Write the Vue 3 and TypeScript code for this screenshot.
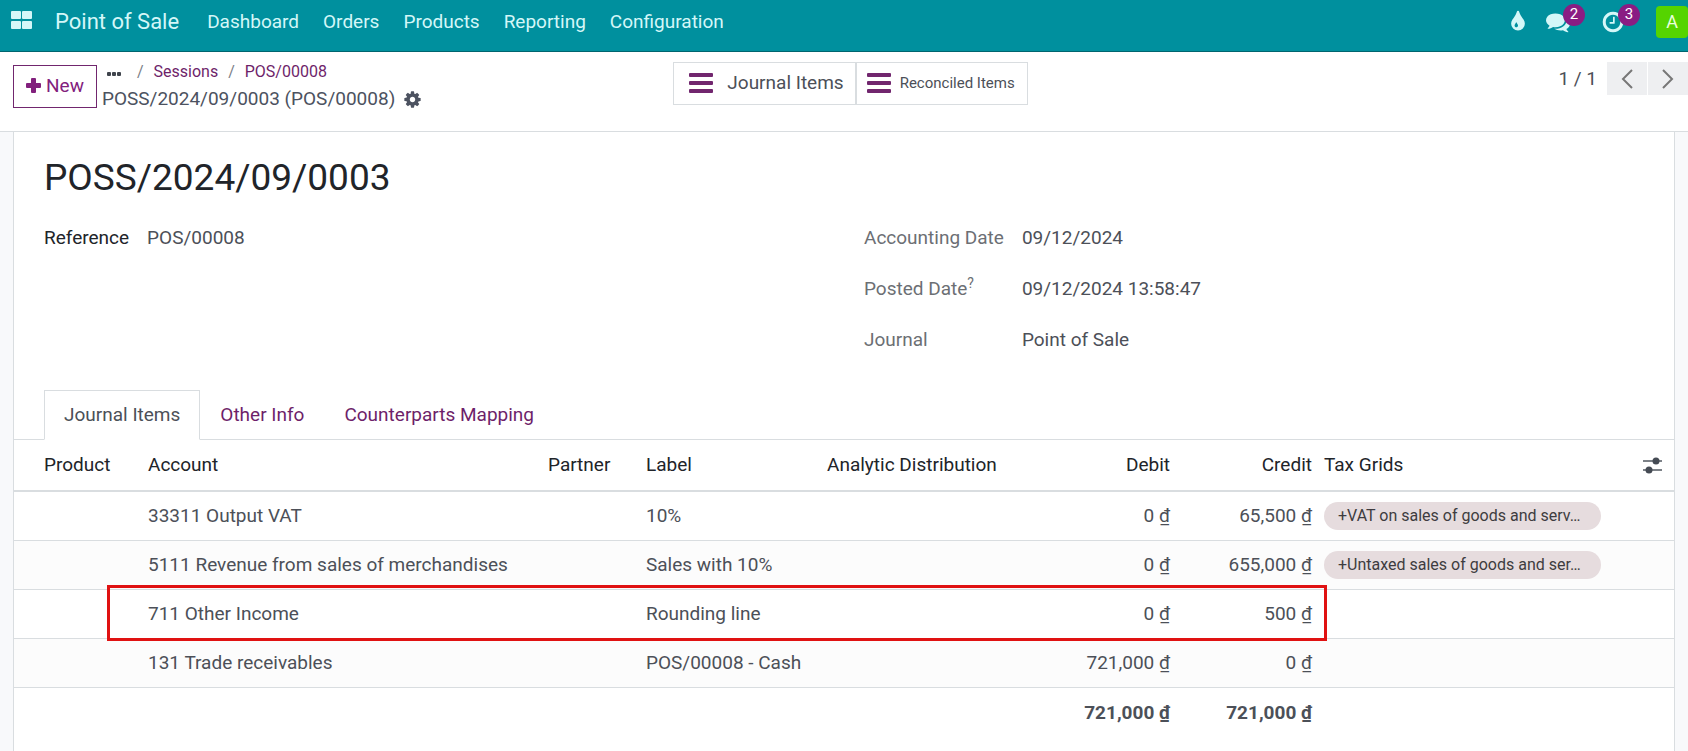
<script setup lang="ts">
interface JournalLine {
  account: string
  label: string
  debit: string
  credit: string
  tag?: string
  highlighted?: boolean
}

interface Field {
  label: string
  value: string
  help?: boolean
}

const menus: string[] = ['Dashboard', 'Orders', 'Products', 'Reporting', 'Configuration']

const fields: Field[] = [
  { label: 'Accounting Date', value: '09/12/2024' },
  { label: 'Posted Date', value: '09/12/2024 13:58:47', help: true },
  { label: 'Journal', value: 'Point of Sale' },
]

const tabs: string[] = ['Journal Items', 'Other Info', 'Counterparts Mapping']

const lines: JournalLine[] = [
  { account: '33311 Output VAT', label: '10%', debit: '0 ₫', credit: '65,500 ₫', tag: '+VAT on sales of goods and serv…' },
  { account: '5111 Revenue from sales of merchandises', label: 'Sales with 10%', debit: '0 ₫', credit: '655,000 ₫', tag: '+Untaxed sales of goods and ser…' },
  { account: '711 Other Income', label: 'Rounding line', debit: '0 ₫', credit: '500 ₫', highlighted: true },
  { account: '131 Trade receivables', label: 'POS/00008 - Cash', debit: '721,000 ₫', credit: '0 ₫' },
]
</script>

<template>
  <div class="app">
    <header class="navbar">
      <button class="icon-btn apps" aria-label="Home menu">
        <svg width="22" height="18" viewBox="0 0 22 18" fill="currentColor">
          <rect width="10" height="8" rx="1" />
          <rect x="11" width="10" height="8" rx="1" />
          <rect y="10" width="10" height="8" rx="1" />
          <rect x="11" y="10" width="10" height="8" rx="1" />
        </svg>
      </button>
      <a class="brand" href="#">Point of Sale</a>
      <nav class="menus">
        <a v-for="menu in menus" :key="menu" href="#">{{ menu }}</a>
      </nav>
      <div class="systray">
        <button class="icon-btn" aria-label="Theme">
          <svg width="24" height="24" viewBox="0 0 1792 1792" fill="currentColor"><path d="M896 1152q0-36-20-69-1-1-15.500-22.500t-25.500-38-25-44-21-50.500q-4-16-21-16t-21 16q-7 23-21 50.500t-25 44-25.500 38-15.500 22.500q-20 33-20 69 0 53 37.500 90.500t90.500 37.500 90.500-37.500 37.500-90.500zm512-128q0 212-150 362t-362 150-362-150-150-362q0-145 81-275 6-9 62.500-90.500t101-151 99.500-178 83-201.500q9-30 34-47t51-17 51.500 17 33.500 47q28 93 83 201.500t99.500 178 101 151 62.500 90.500q81 127 81 275z" /></svg>
        </button>
        <button class="icon-btn with-badge" aria-label="Messages">
          <svg width="24" height="24" viewBox="0 0 1792 1792" fill="currentColor"><path d="M1408 768q0 139-94 257t-256.500 186.500-353.500 68.500q-86 0-176-16-124 88-278 128-36 9-86 16h-3q-11 0-20.500-8t-11.500-21q-1-3-1-6.500t.5-6.500 2-6l2.500-5 3.500-5.500 4-5 4.500-5 4-4.500q5-6 23-25t26-29.500 22.500-29 25-38.500 20.500-44q-124-72-195-177t-71-224q0-139 94-257t256.500-186.500 353.500-68.500 353.500 68.500 256.500 186.500 94 257zm384 256q0 120-71 224.500t-195 176.500q10 24 20.500 44t25 38.500 22.500 29 26 29.500 23 25q1 1 4 4.500t4.500 5 4 5 3.500 5.500l2.500 5 2 6 .5 6.500-1 6.500q-3 14-13 22t-22 7q-50-7-86-16-154-40-278-128-90 16-176 16-271 0-472-132 58 4 88 4 161 0 309-45t264-129q125-92 192-212t67-254q0-77-23-152 129 71 204 178t75 230z" /></svg>
          <span class="badge">2</span>
        </button>
        <button class="icon-btn with-badge" aria-label="Activities">
          <svg width="24" height="24" viewBox="0 0 1792 1792" fill="currentColor"><path d="M1024 544v448q0 14-9 23t-23 9h-320q-14 0-23-9t-9-23v-64q0-14 9-23t23-9h224v-352q0-14 9-23t23-9h64q14 0 23 9t9 23zm416 352q0-148-73-273t-198-198-273-73-273 73-198 198-73 273 73 273 198 198 273 73 273-73 198-198 73-273zm224 0q0 209-103 385.500t-279.500 279.500-385.500 103-385.500-103-279.500-279.500-103-385.500 103-385.500 279.500-279.500 385.500-103 385.500 103 279.500 279.500 103 385.500z" /></svg>
          <span class="badge">3</span>
        </button>
        <button class="avatar">A</button>
      </div>
    </header>

    <section class="control-panel">
      <div class="left">
        <button class="new-btn">
          <svg width="15" height="15" viewBox="0 0 15 15" fill="currentColor"><path d="M6 0h3q1 0 1 1v4h4q1 0 1 1v3q0 1-1 1h-4v4q0 1-1 1h-3q-1 0-1-1v-4h-4q-1 0-1-1v-3q0-1 1-1h4v-4q0-1 1-1z" /></svg>
          New
        </button>
        <div class="crumbs">
          <nav class="trail">
            <button class="more" aria-label="More">
              <svg width="14" height="4" viewBox="0 0 14 4" fill="currentColor"><rect width="4" height="4" rx="1" /><rect x="5" width="4" height="4" rx="1" /><rect x="10" width="4" height="4" rx="1" /></svg>
            </button>
            <span class="slash">/</span>
            <a href="#">Sessions</a>
            <span class="slash">/</span>
            <a href="#">POS/00008</a>
          </nav>
          <div class="current">
            <span>POSS/2024/09/0003 (POS/00008)</span>
            <button class="icon-btn gear" aria-label="Actions">
              <svg width="19" height="19" viewBox="0 0 1792 1792" fill="currentColor"><path d="M1152 896q0-106-75-181t-181-75-181 75-75 181 75 181 181 75 181-75 75-181zm512-109v222q0 12-8 23t-20 13l-185 28q-19 54-39 91 35 50 107 138 10 12 10 25t-9 23q-27 37-99 108t-94 71q-12 0-26-9l-138-108q-44 23-91 38-16 136-29 186-7 28-36 28h-222q-14 0-24.500-8.500t-11.500-21.500l-28-184q-49-16-90-37l-141 107q-10 9-25 9-14 0-25-11-126-114-165-168-7-10-7-23 0-12 8-23 15-21 51-66.500t54-70.500q-27-50-41-99l-183-27q-13-2-21-12.500t-8-23.500v-222q0-12 8-23t19-13l186-28q14-46 39-92-40-57-107-138-10-12-10-24 0-10 9-23 26-36 98.500-107.500t94.500-71.500q13 0 26 10l138 107q44-23 91-38 16-136 29-186 7-28 36-28h222q14 0 24.500 8.500t11.500 21.500l28 184q49 16 90 37l142-107q9-9 24-9 13 0 25 10 129 119 165 170 7 8 7 22 0 12-8 23-15 21-51 66.500t-54 70.500q26 50 41 98l183 28q13 2 21 12.500t8 23.500z" /></svg>
            </button>
          </div>
        </div>
      </div>
      <div class="stats">
        <button class="stat">
          <svg width="24" height="20" viewBox="0 0 24 20" fill="currentColor"><rect width="24" height="4" rx="1" /><rect y="8" width="24" height="4" rx="1" /><rect y="16" width="24" height="4" rx="1" /></svg>
          <span>Journal Items</span>
        </button>
        <button class="stat compact">
          <svg width="24" height="20" viewBox="0 0 24 20" fill="currentColor"><rect width="24" height="4" rx="1" /><rect y="8" width="24" height="4" rx="1" /><rect y="16" width="24" height="4" rx="1" /></svg>
          <span>Reconciled Items</span>
        </button>
      </div>
      <div class="pager">
        <span>1 / 1</span>
        <div class="pager-buttons">
          <button aria-label="Previous">
            <svg width="12" height="20" viewBox="0 0 12 20" fill="none" stroke="currentColor" stroke-width="2"><path d="M11 1 2 10l9 9" /></svg>
          </button>
          <button aria-label="Next">
            <svg width="12" height="20" viewBox="0 0 12 20" fill="none" stroke="currentColor" stroke-width="2"><path d="m1 1 9 9-9 9" /></svg>
          </button>
        </div>
      </div>
    </section>

    <main class="sheet">
      <h1>POSS/2024/09/0003</h1>
      <div class="groups">
        <dl class="fields reference">
          <dt>Reference</dt>
          <dd>POS/00008</dd>
        </dl>
        <dl class="fields">
          <template v-for="field in fields" :key="field.label">
            <dt>{{ field.label }}<sup v-if="field.help">?</sup></dt>
            <dd>{{ field.value }}</dd>
          </template>
        </dl>
      </div>

      <div class="tabs" role="tablist">
        <button v-for="(tab, i) in tabs" :key="tab" role="tab" :aria-selected="i === 0" :class="{ active: i === 0 }">{{ tab }}</button>
      </div>

      <table>
        <colgroup>
          <col class="c-product" />
          <col />
          <col class="c-partner" />
          <col class="c-label" />
          <col class="c-analytic" />
          <col class="c-debit" />
          <col class="c-credit" />
          <col class="c-tax" />
          <col class="c-options" />
        </colgroup>
        <thead>
          <tr>
            <th>Product</th>
            <th>Account</th>
            <th>Partner</th>
            <th>Label</th>
            <th>Analytic Distribution</th>
            <th class="num">Debit</th>
            <th class="num">Credit</th>
            <th>Tax Grids</th>
            <th class="options">
              <button class="icon-btn" aria-label="Optional columns">
                <svg width="19" height="17" viewBox="0 0 19 17" fill="currentColor"><path d="M0 3h19v2H0zM0 12h19v2H0z" opacity=".7" /><circle cx="13" cy="4" r="3.500" /><circle cx="6" cy="13" r="3.500" /></svg>
              </button>
            </th>
          </tr>
        </thead>
        <tbody>
          <tr v-for="line in lines" :key="line.account">
            <td><span v-if="line.highlighted" class="marker"></span></td>
            <td>{{ line.account }}</td>
            <td></td>
            <td>{{ line.label }}</td>
            <td></td>
            <td class="num">{{ line.debit }}</td>
            <td class="num">{{ line.credit }}</td>
            <td><span v-if="line.tag" class="tag">{{ line.tag }}</span></td>
            <td></td>
          </tr>
        </tbody>
        <tfoot>
          <tr>
            <td colspan="5"></td>
            <td class="num">721,000 ₫</td>
            <td class="num">721,000 ₫</td>
            <td colspan="2"></td>
          </tr>
        </tfoot>
      </table>
    </main>
  </div>
</template>

<style>
body {
  margin: 0;
}
</style>

<style scoped>
.app {
  display: flex;
  flex-direction: column;
  min-height: 100vh;
  background: #f8f9fb;
  color: #4c5058;
  font-family: Roboto, "Noto Sans", sans-serif;
  font-size: 19px;
  line-height: 24px;
}

button {
  margin: 0;
  padding: 0;
  border: 0;
  background: none;
  color: inherit;
  font: inherit;
}

a {
  color: inherit;
  text-decoration: none;
}

svg {
  display: block;
}

.icon-btn {
  display: flex;
  position: relative;
}

.navbar {
  display: flex;
  align-items: center;
  box-sizing: border-box;
  height: 52px;
  padding: 0 0 8px 11px;
  border-bottom: 1px solid #00656f;
  background: #00909e;
  color: #d4f7f8;
}

.apps {
  margin: 0 22px 4px 0;
}

.brand {
  margin-right: 28px;
  font-size: 22px;
}

.menus {
  display: flex;
  flex: 1;
  gap: 24px;
}

.systray {
  display: flex;
  align-items: center;
  gap: 16px;
}

.with-badge {
  padding-right: 15px;
}

.badge {
  position: absolute;
  top: -6px;
  left: 17px;
  width: 22px;
  height: 22px;
  border-radius: 50%;
  background: #8a1c83;
  color: #fff;
  font-size: 15px;
  line-height: 20px;
  text-align: center;
}

.avatar {
  width: 32px;
  height: 32px;
  border-radius: 4px;
  background: #55d400;
  color: #eaffdc;
  font-size: 18px;
}

.control-panel {
  display: grid;
  grid-template-columns: 1fr auto 1fr;
  align-items: start;
  box-sizing: border-box;
  height: 80px;
  padding: 10px 0 0 13px;
  border-bottom: 1px solid #d9dde0;
  background: #fff;
}

.left {
  display: flex;
  gap: 5px;
}

.new-btn {
  display: flex;
  align-items: center;
  gap: 5px;
  height: 43px;
  margin-top: 3px;
  padding: 0 12px 2px;
  border: 1px solid #71266e;
  color: #82207d;
}

.trail {
  display: flex;
  align-items: center;
  height: 20px;
  margin-bottom: 2px;
  color: #6e1f6a;
  font-size: 16px;
}

.more {
  margin: 4px 16px 0 5px;
  color: #3f444c;
}

.slash {
  color: #7b8087;
}

.trail a {
  margin: 0 10px;
}

.current {
  display: flex;
  align-items: center;
  gap: 8px;
  height: 30px;
  color: #4c5260;
}

.stats {
  display: flex;
}

.stat {
  display: flex;
  align-items: center;
  gap: 14px;
  height: 43px;
  padding: 0 11px 2px 15px;
  border: 1px solid #d9dde0;
}

.stat svg {
  color: #71266e;
}

.stat.compact {
  gap: 9px;
  padding-left: 10px;
  padding-right: 12px;
  font-size: 15px;
}

.pager {
  display: flex;
  align-items: center;
  justify-content: flex-end;
  gap: 10px;
}

.pager-buttons {
  display: flex;
  gap: 1px;
}

.pager-buttons button {
  display: flex;
  align-items: center;
  justify-content: center;
  width: 40px;
  height: 33px;
  background: #eeeff1;
  color: #777;
}

.sheet {
  flex: 1;
  margin: 0 13px;
  border: solid #d9dde0;
  border-width: 0 1px;
  background: #fff;
}

h1 {
  margin: 0;
  padding: 22px 30px 0;
  color: #212429;
  font-size: 37px;
  font-weight: 400;
  line-height: 48px;
}

.groups {
  display: grid;
  grid-template-columns: 1fr 1fr;
  gap: 40px;
  padding: 24px 30px 38px;
}

.fields {
  display: grid;
  grid-template-columns: auto 1fr;
  align-content: start;
  gap: 27px 18px;
  margin: 0;
}

dt {
  color: #6c6f74;
}

.reference dt {
  color: #212429;
}

dd {
  margin: 0;
}

sup {
  font-size: 14px;
  line-height: 0;
}

.tabs {
  display: flex;
  padding: 0 30px;
  border-bottom: 1px solid #d9dde0;
}

.tabs button {
  height: 50px;
  margin-bottom: -1px;
  padding: 0 19px;
  border: 1px solid transparent;
  color: #6e1f6a;
}

.tabs .active {
  border-color: #d9dde0;
  border-bottom-color: #fff;
  background: #fff;
  color: #4c5058;
}

table {
  width: 100%;
  border-collapse: separate;
  border-spacing: 0;
  table-layout: fixed;
}

.c-product { width: 128px; }
.c-partner { width: 98px; }
.c-label { width: 181px; }
.c-analytic { width: 219px; }
.c-debit { width: 136px; }
.c-credit { width: 142px; }
.c-tax { width: 289px; }
.c-options { width: 67px; }

th,
td {
  box-sizing: border-box;
  height: 49px;
  padding: 0 6px;
  border-bottom: 1px solid #d9dde0;
  text-align: left;
  white-space: nowrap;
}

th {
  height: 52px;
  border-bottom-width: 2px;
  color: #212429;
  font-weight: 400;
}

th:first-child {
  padding-left: 30px;
}

.num {
  text-align: right;
}

.options {
  padding-right: 12px;
}

.options .icon-btn {
  margin-left: auto;
  color: #454b54;
}

tbody tr {
  position: relative;
}

tbody tr:nth-child(even) {
  background: #fcfcfc;
}

tfoot td {
  border-bottom: 0;
  font-weight: 700;
}

.tag {
  display: block;
  overflow: hidden;
  padding: 0 14px;
  border-radius: 14px;
  background: #e6dcde;
  color: #3e3c40;
  font-size: 16px;
  line-height: 28px;
  text-overflow: ellipsis;
}

/* Callout frame around the rounding entry */
.marker {
  position: absolute;
  z-index: 1;
  top: -5px;
  right: 347px;
  bottom: -2px;
  left: 93px;
  border: 3px solid #e01212;
}
</style>
